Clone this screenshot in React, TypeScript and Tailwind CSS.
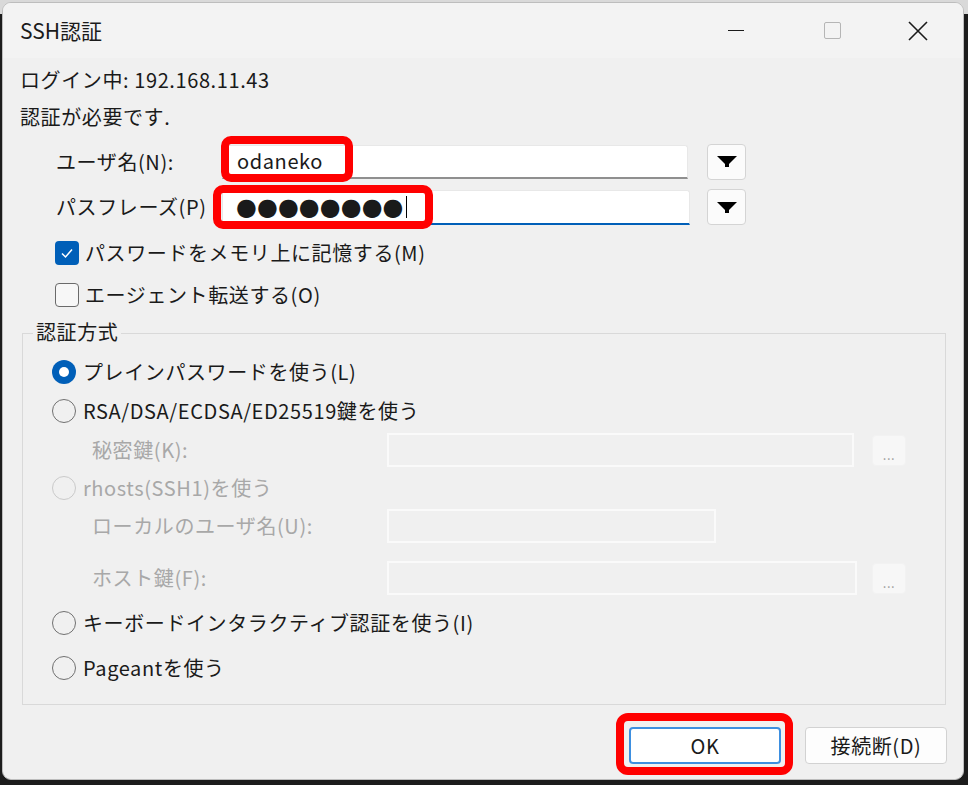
import React from "react";

const DropArrow = () => (
  <svg width="20" height="11" viewBox="0 0 20 11">
    <path d="M0 0H20L12 8V11H8V8Z" fill="#000" />
  </svg>
);

const DropButton = () => (
  <div className="ml-[19px] w-[39px] h-[36px] rounded-[4px] border border-[#d4d4d4] bg-[#fbfbfb] flex items-center justify-center">
    <DropArrow />
  </div>
);

const Radio = ({ checked, disabled }: { checked?: boolean; disabled?: boolean }) => {
  if (checked) {
    return (
      <span className="w-[24px] h-[24px] shrink-0 rounded-full bg-[#005fb8] flex items-center justify-center">
        <span className="w-[10px] h-[10px] rounded-full bg-white" />
      </span>
    );
  }
  return (
    <span
      className={`w-[24px] h-[24px] shrink-0 rounded-full border-[1.5px] ${
        disabled ? "border-[#cacaca]" : "border-[#707070]"
      }`}
    />
  );
};

const DisabledField = ({ width }: { width: string }) => (
  <div className={`${width} h-[34px] border-2 border-[#fafafa] bg-[#f0f0f0]`} />
);

const DotsButton = () => (
  <div className="ml-[18px] w-[34px] h-[31px] rounded-[4px] bg-[#f7f7f7] border border-[#f2f2f2] flex items-end justify-center pb-[4px] text-[13px] leading-none text-[#9a9a9a]">
    ...
  </div>
);

export default function App() {
  return (
    <div className="w-[968px] h-[785px] pl-[2px] pt-[2px] bg-[linear-gradient(to_bottom,#d9d9d9_0px,#d9d9d9_14px,#1c1c1c_14px)] font-['Noto_Sans_CJK_JP',sans-serif] text-[#1a1a1a]">
      <div className="relative w-[962px] h-[778px] rounded-[9px] border border-[#bdbdbd] bg-[#f0f0f0] overflow-hidden flex flex-col">
        {/* title bar */}
        <div className="h-[55px] shrink-0 bg-[#f3f3f3] flex items-center">
          <div className="pl-[17px] flex-1 text-[21px]">SSH認証</div>
          <div className="w-[110px] h-full flex items-center justify-center">
            <div className="w-[16px] h-[1.5px] bg-[#1a1a1a]" />
          </div>
          <div className="w-[82px] h-full flex items-center justify-center">
            <div className="w-[17px] h-[17px] rounded-[2px] border-[1.5px] border-[#b5b5b5]" />
          </div>
          <div className="w-[90px] h-full flex items-center justify-center">
            <svg width="20" height="20" viewBox="0 0 20 20">
              <path d="M1 1L19 19M19 1L1 19" stroke="#1a1a1a" strokeWidth="1.6" />
            </svg>
          </div>
        </div>

        {/* body */}
        <div className="flex-1 pl-[17px] pr-[16px] pt-[4px] text-[20px] tracking-[0.6px]">
          <div className="h-[36px] flex items-center">ログイン中: 192.168.11.43</div>
          <div className="h-[38px] flex items-center">認証が必要です.</div>

          <div className="mt-[8px] h-[35px] flex items-center">
            <div className="w-[202px] pl-[36px]">ユーザ名(N):</div>
            <div className="w-[466px] h-[34px] bg-white border border-[#e8e8e8] border-b-2 border-b-[#8f8f8f] rounded-t-[3px] flex items-center pl-[14px]">
              odaneko
            </div>
            <DropButton />
          </div>

          <div className="mt-[10px] h-[36px] flex items-center">
            <div className="w-[202px] pl-[36px]">パスフレーズ(P)</div>
            <div className="w-[468px] h-[35px] bg-white border border-[#e8e8e8] border-b-2 border-b-[#005fb8] rounded-t-[3px] flex items-center pl-[13px]">
              <span className="font-['DejaVu_Sans',sans-serif] text-[24px] tracking-[0px] leading-none">●●●●●●●●</span>
              <span className="ml-[2px] w-[1px] h-[22px] bg-black" />
            </div>
            <div className="ml-[-2px]">
              <DropButton />
            </div>
          </div>

          <div className="mt-[13px] h-[30px] flex items-center pl-[35px]">
            <span className="w-[24px] h-[24px] rounded-[4px] bg-[#005fb8] flex items-center justify-center">
              <svg width="14" height="14" viewBox="0 0 14 14">
                <path d="M2 7.5L5.5 11L12 3.5" stroke="#fff" strokeWidth="1.5" fill="none" />
              </svg>
            </span>
            <span className="ml-[6px]">パスワードをメモリ上に記憶する(M)</span>
          </div>

          <div className="mt-[12px] h-[30px] flex items-center pl-[35px]">
            <span className="w-[24px] h-[24px] rounded-[4px] border-[1.5px] border-[#6a6a6a] bg-[#f7f7f7]" />
            <span className="ml-[6px]">エージェント転送する(O)</span>
          </div>

          {/* auth method group */}
          <div className="relative mt-[23px] ml-[2px] w-[924px] h-[372px] border border-[#d9d9d9] pt-[19px] pl-[29px]">
            <div className="absolute left-[10px] top-[-17px] px-[3px] bg-[#f0f0f0]">認証方式</div>

            <div className="h-[38px] flex items-center">
              <Radio checked />
              <span className="ml-[7px]">プレインパスワードを使う(L)</span>
            </div>
            <div className="h-[39px] flex items-center">
              <Radio />
              <span className="ml-[7px]">RSA/DSA/ECDSA/ED25519鍵を使う</span>
            </div>
            <div className="h-[40px] flex items-center">
              <div className="w-[335px] pl-[40px] text-[#a8a8a8]">秘密鍵(K):</div>
              <DisabledField width="w-[467px]" />
              <DotsButton />
            </div>
            <div className="h-[36px] flex items-center">
              <Radio disabled />
              <span className="ml-[7px] text-[#a8a8a8]">rhosts(SSH1)を使う</span>
            </div>
            <div className="mt-[1px] h-[38px] flex items-center">
              <div className="w-[335px] pl-[40px] text-[#a8a8a8]">ローカルのユーザ名(U):</div>
              <DisabledField width="w-[329px]" />
            </div>
            <div className="mt-[14px] h-[38px] flex items-center">
              <div className="w-[335px] pl-[40px] text-[#a8a8a8]">ホスト鍵(F):</div>
              <DisabledField width="w-[470px]" />
              <div className="ml-[-3px]">
                <DotsButton />
              </div>
            </div>
            <div className="mt-[7px] h-[38px] flex items-center">
              <Radio />
              <span className="ml-[7px]">キーボードインタラクティブ認証を使う(I)</span>
            </div>
            <div className="mt-[7px] h-[38px] flex items-center">
              <Radio />
              <span className="ml-[7px]">Pageantを使う</span>
            </div>
          </div>

          {/* buttons */}
          <div className="mt-[22px] flex justify-end gap-[24px]">
            <div className="w-[152px] h-[37px] rounded-[4px] border-2 border-[#3d8fe0] bg-white flex items-center justify-center">
              OK
            </div>
            <div className="w-[142px] h-[37px] rounded-[4px] border border-[#d2d2d2] bg-[#fdfdfd] flex items-center justify-center">
              接続断(D)
            </div>
          </div>
        </div>

        {/* red highlight boxes */}
        <div className="absolute left-[218px] top-[133px] w-[132px] h-[46px] rounded-[10px] border-[8px] border-[#ff0000]" />
        <div className="absolute left-[210px] top-[182px] w-[220px] h-[44px] rounded-[10px] border-[8px] border-[#ff0000]" />
        <div className="absolute left-[613px] top-[710px] w-[177px] h-[62px] rounded-[12px] border-[8px] border-[#ff0000]" />
      </div>
    </div>
  );
}
